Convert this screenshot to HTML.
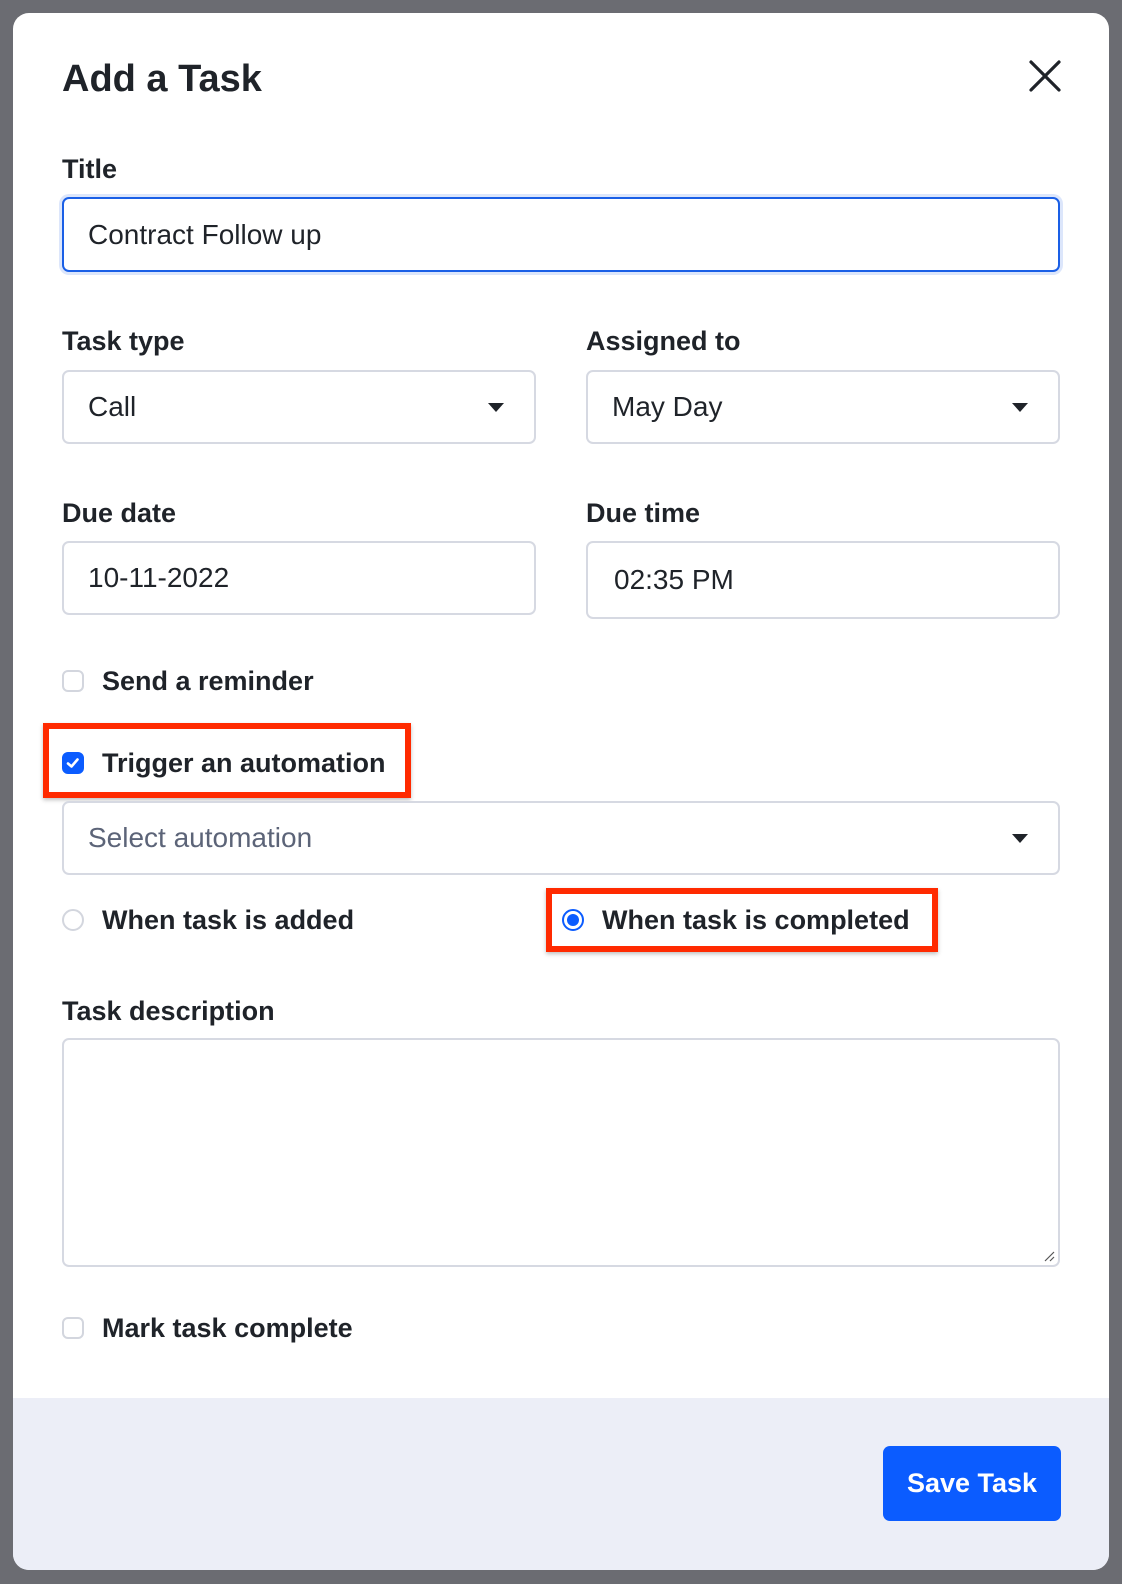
<!DOCTYPE html>
<html><head><meta charset="utf-8"><style>
*{box-sizing:border-box;margin:0;padding:0}
body{width:1122px;height:1584px;background:#6b6c72;font-family:"Liberation Sans",sans-serif;color:#1f2329;position:relative;overflow:hidden}
.modal{position:absolute;left:13px;top:13px;width:1096px;height:1557px;background:#fff;border-radius:16px;overflow:hidden}
.a{position:absolute}
.lbl{position:absolute;font-size:27px;font-weight:bold;color:#1f2329;line-height:30px}
.inp{position:absolute;border:2px solid #d6d9e2;border-radius:7px;background:#fff;font-size:28px;color:#1f2329;padding-left:24px;display:flex;align-items:center}
.caret{position:absolute;right:30px;top:50%;margin-top:-4px;width:0;height:0;border-left:8px solid transparent;border-right:8px solid transparent;border-top:9px solid #1f2329}
.cb{position:absolute;width:22px;height:22px;border:2px solid #d3d6de;border-radius:6px;background:#fff}
.rd{position:absolute;width:22px;height:22px;border:2px solid #d3d6de;border-radius:50%;background:#fff}
.red{position:absolute;border:6px solid #ff2a00;box-shadow:0 2px 4px rgba(0,0,0,.25)}
</style></head><body>
<div class="modal">
  <div class="a" style="left:49px;top:44px;font-size:38px;font-weight:bold;line-height:44px">Add a Task</div>
  <svg class="a" style="left:1015px;top:46px" width="34" height="34" viewBox="0 0 34 34"><path d="M3 3L31 31M31 3L3 31" stroke="#1f2329" stroke-width="3.2" stroke-linecap="round"/></svg>

  <div class="lbl" style="left:49px;top:141px">Title</div>
  <div class="inp" style="left:49px;top:184px;width:998px;height:75px;border-color:#1a5fe6;box-shadow:0 0 0 3px #dce6fb">Contract Follow up</div>

  <div class="lbl" style="left:49px;top:313px">Task type</div>
  <div class="inp" style="left:49px;top:357px;width:474px;height:74px">Call<div class="caret"></div></div>
  <div class="lbl" style="left:573px;top:313px">Assigned to</div>
  <div class="inp" style="left:573px;top:357px;width:474px;height:74px">May Day<div class="caret"></div></div>

  <div class="lbl" style="left:49px;top:485px">Due date</div>
  <div class="inp" style="left:49px;top:528px;width:474px;height:74px">10-11-2022</div>
  <div class="lbl" style="left:573px;top:485px">Due time</div>
  <div class="inp" style="left:573px;top:528px;width:474px;height:78px;padding-left:26px">02:35 PM</div>

  <div class="cb" style="left:49px;top:657px"></div>
  <div class="lbl" style="left:89px;top:653px">Send a reminder</div>

  <div class="red" style="left:30px;top:710px;width:368px;height:75px"></div>
  <div class="cb" style="left:49px;top:739px;background:#0b5cff;border-color:#0b5cff">
    <svg width="18" height="18" viewBox="0 0 18 18" style="position:absolute;left:0;top:0"><path d="M4 9.5L7.5 12.5L13.5 5.5" stroke="#fff" stroke-width="2.6" fill="none" stroke-linecap="round" stroke-linejoin="round"/></svg>
  </div>
  <div class="lbl" style="left:89px;top:735px">Trigger an automation</div>
  <div class="inp" style="left:49px;top:788px;width:998px;height:74px;color:#5c6478">Select automation<div class="caret"></div></div>

  <div class="rd" style="left:49px;top:896px"></div>
  <div class="lbl" style="left:89px;top:892px">When task is added</div>
  <div class="red" style="left:533px;top:875px;width:392px;height:64px"></div>
  <div class="rd" style="left:549px;top:896px;border-color:#0b5cff"><div style="position:absolute;left:3px;top:3px;width:12px;height:12px;border-radius:50%;background:#0b5cff"></div></div>
  <div class="lbl" style="left:589px;top:892px">When task is completed</div>

  <div class="lbl" style="left:49px;top:983px">Task description</div>
  <div class="inp" style="left:49px;top:1025px;width:998px;height:229px">
    <svg class="a" style="right:3px;bottom:3px" width="12" height="12" viewBox="0 0 12 12"><path d="M2 11L11 2M7 11L11 7" stroke="#555" stroke-width="1.2"/></svg>
  </div>

  <div class="cb" style="left:49px;top:1304px"></div>
  <div class="lbl" style="left:89px;top:1300px">Mark task complete</div>

  <div class="a" style="left:0;top:1385px;width:1096px;height:172px;background:#eceef7"></div>
  <div class="a" style="left:870px;top:1433px;width:178px;height:75px;background:#0b5cff;border-radius:7px;color:#fff;font-size:27px;font-weight:bold;display:flex;align-items:center;justify-content:center">Save Task</div>
</div>
</body></html>
